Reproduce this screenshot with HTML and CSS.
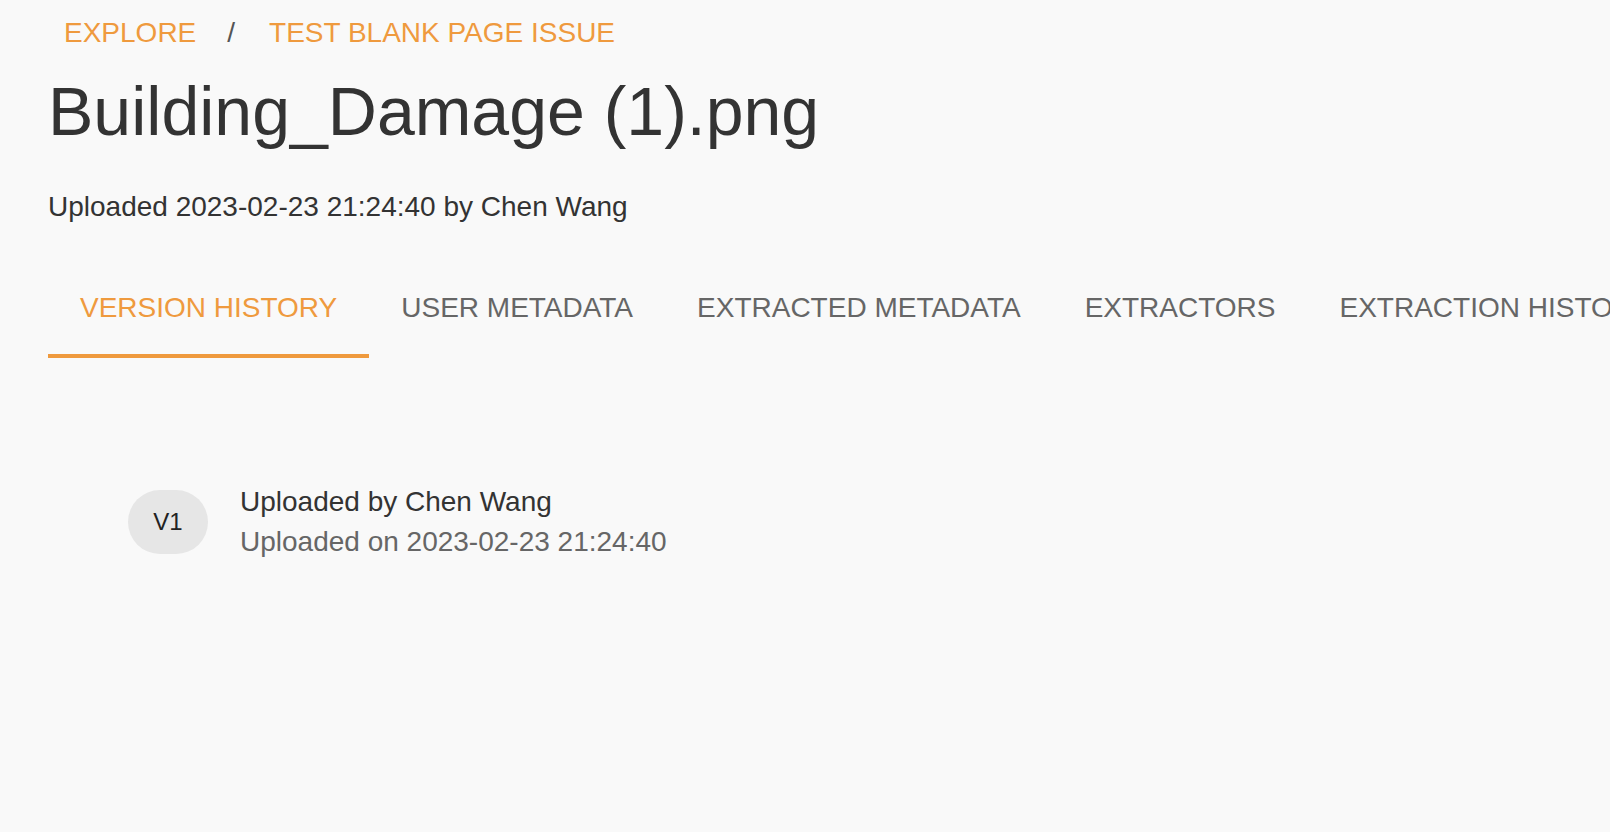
FILE: index.html
```html
<!DOCTYPE html>
<html lang="en">
<head>
<meta charset="utf-8">
<title>Building_Damage (1).png</title>
<link rel="stylesheet" href="styles.css">
</head>
<body>
<div class="page">
  <nav class="crumbs">
    <a class="crumb" href="#">EXPLORE</a>
    <span class="sep">/</span>
    <a class="crumb" href="#">TEST BLANK PAGE ISSUE</a>
  </nav>
  <h1 class="title">Building_Damage (1).png</h1>
  <p class="subtitle">Uploaded 2023-02-23 21:24:40 by Chen Wang</p>
  <div class="tabs">
    <div class="tab active">VERSION HISTORY</div>
    <div class="tab">USER METADATA</div>
    <div class="tab">EXTRACTED METADATA</div>
    <div class="tab">EXTRACTORS</div>
    <div class="tab">EXTRACTION HISTORY</div>
  </div>
  <ul class="versions">
    <li class="version">
      <span class="chip">V1</span>
      <div class="vtext">
        <div class="vprimary">Uploaded by Chen Wang</div>
        <div class="vsecondary">Uploaded on 2023-02-23 21:24:40</div>
      </div>
    </li>
  </ul>
</div>
</body>
</html>
```
FILE: styles.css
```css
html, body {
  margin: 0;
  padding: 0;
  background: #f9f9f9;
  overflow: hidden;
}
body {
  font-family: "Liberation Sans", Arial, Helvetica, sans-serif;
  color: #333333;
  width: 1610px;
  height: 832px;
}
.page {
  padding-left: 48px;
}
.crumbs {
  display: flex;
  align-items: center;
  padding-top: 19px;
  padding-left: 16px;
  height: 28px;
  font-size: 28px;
  line-height: 28px;
}
.crumb {
  color: #ef9a3e;
  text-decoration: none;
}
.sep {
  color: #555555;
  margin: 0 34px 0 31px;
}
.title {
  margin: 30px 0 0 0;
  font-size: 68px;
  line-height: 68px;
  font-weight: 400;
  color: #333333;
}
.subtitle {
  margin: 48px 0 0 0;
  font-size: 28px;
  line-height: 28px;
  color: #333333;
}
.tabs {
  display: flex;
  margin-top: 56px;
  white-space: nowrap;
}
.tab {
  position: relative;
  flex: none;
  padding: 17px 32px 36px 32px;
  font-size: 28px;
  line-height: 28px;
  color: #666666;
}
.tab.active {
  color: #ef9a3e;
}
.tab.active::after {
  content: "";
  position: absolute;
  left: 0;
  right: 0;
  bottom: 0;
  height: 4px;
  background: #ef9a3e;
}
.versions {
  list-style: none;
  margin: 124px 0 0 0;
  padding: 0 0 0 80px;
}
.version {
  display: flex;
  align-items: center;
}
.chip {
  display: flex;
  align-items: center;
  justify-content: center;
  width: 80px;
  height: 64px;
  border-radius: 32px;
  background: #e6e6e6;
  color: #222222;
  font-size: 24px;
  margin-right: 32px;
  flex: none;
}
.vtext {
  font-size: 28px;
  line-height: 40px;
}
.vprimary {
  color: #333333;
}
.vsecondary {
  color: #666666;
}
```
